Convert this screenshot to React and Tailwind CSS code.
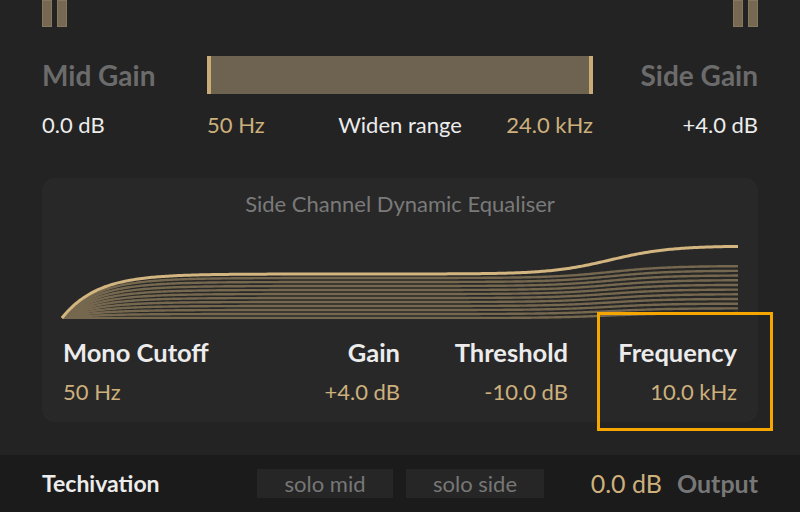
import React from "react";

// curve shape for the EQ display, in page coordinates
const X0 = 62;
const X1 = 738;
const BASE = 318;

function curveY(x, level, rise) {
  const left = (BASE - level) * Math.exp(-(x - X0) / 35);
  const right = rise / (1 + Math.exp(-(x - 610) / 30));
  return level + left - right;
}

function buildPath(level, rise) {
  const pts = [];
  for (let x = X0; x <= X1; x += 2) {
    pts.push(`${x},${Math.min(BASE, curveY(x, level, rise)).toFixed(2)}`);
  }
  return "M" + pts.join(" L");
}

const stripes = Array.from({ length: 11 }, (_, k) => {
  const i = k + 1;
  return buildPath(274 + 4 * i, 12 - (7 * (i - 1)) / 10);
});
const topCurve = buildPath(274, 28);

function Meter() {
  return (
    <div className="flex gap-[5px]">
      <div className="w-[10px] h-[27px] bg-[#766852] border border-[#86775d]" />
      <div className="w-[10px] h-[27px] bg-[#766852] border border-[#86775d]" />
    </div>
  );
}

function EqGraph() {
  return (
    <svg width="716" height="84" viewBox="42 238 716 84" className="block">
      <defs>
        <clipPath id="eqclip">
          <rect x="42" y="238" width="716" height="81" />
        </clipPath>
      </defs>
      <g clipPath="url(#eqclip)" fill="none">
        {stripes.map((d, i) => (
          <path key={i} d={d} stroke="#75684f" strokeWidth="2.4" />
        ))}
        <path d={topCurve} stroke="#d3b580" strokeWidth="3" />
      </g>
    </svg>
  );
}

export default function App() {
  return (
    <div
      className="relative w-[800px] h-[512px] overflow-hidden bg-[#232323] flex flex-col"
      style={{ fontFamily: "Lato, 'Open Sans', sans-serif" }}
    >
      {/* top meters */}
      <div className="flex justify-between px-[42px]">
        <Meter />
        <Meter />
      </div>

      {/* width controls */}
      <div className="grid grid-cols-[165px_386px_165px] px-[42px] mt-[29px] items-center h-[38px]">
        <div className="text-[28px] font-bold text-[#6b6b6b] leading-none">Mid Gain</div>
        <div className="h-[38px] bg-[#6e6350] border-x-4 border-[#c9ab77]" />
        <div className="text-[28px] font-bold text-[#6b6b6b] leading-none text-right">Side Gain</div>
      </div>
      <div className="grid grid-cols-[165px_386px_165px] px-[42px] mt-[20px] items-center text-[22px] leading-none h-[22px]">
        <div className="text-[#ececec]">0.0 dB</div>
        <div className="grid grid-cols-[1fr_auto_1fr]">
          <span className="text-[#cdb07c]">50 Hz</span>
          <span className="text-[#ececec]">Widen range</span>
          <span className="text-[#cdb07c] text-right">24.0 kHz</span>
        </div>
        <div className="text-[#ececec] text-right">+4.0 dB</div>
      </div>

      {/* side channel EQ panel */}
      <div className="mx-[42px] mt-[42px] h-[244px] rounded-[12px] bg-[#282828] flex flex-col">
        <div className="text-center text-[22px] text-[#7a7a7a] leading-none mt-[15px] h-[22px]">
          Side Channel Dynamic Equaliser
        </div>
        <div className="mt-[23px]">
          <EqGraph />
        </div>
        <div className="grid grid-cols-[185px_152px_168px_169px] px-[21px] mt-[18px] leading-none">
          <div className="text-[25.5px] font-bold text-[#ececec]">Mono Cutoff</div>
          <div className="text-[25.5px] font-bold text-[#ececec] text-right">Gain</div>
          <div className="text-[25.5px] font-bold text-[#ececec] text-right">Threshold</div>
          <div className="text-[25.5px] font-bold text-[#ececec] text-right">Frequency</div>
          <div className="text-[22px] text-[#cdb07c] mt-[15px]">50 Hz</div>
          <div className="text-[22px] text-[#cdb07c] mt-[15px] text-right">+4.0 dB</div>
          <div className="text-[22px] text-[#cdb07c] mt-[15px] text-right">-10.0 dB</div>
          <div className="text-[22px] text-[#cdb07c] mt-[15px] text-right">10.0 kHz</div>
        </div>
      </div>

      {/* footer */}
      <div className="mt-auto h-[57px] bg-[#1b1b1b] flex items-center px-[42px]">
        <div className="w-[215px] text-[23px] font-bold text-[#ececec]">Techivation</div>
        <div className="w-[136px] h-[29px] bg-[#262626] flex items-center justify-center text-[22px] text-[#777777]">
          solo mid
        </div>
        <div className="ml-[13px] w-[138px] h-[29px] bg-[#262626] flex items-center justify-center text-[22px] text-[#777777]">
          solo side
        </div>
        <div className="ml-auto flex items-center gap-[15px] text-[25px]">
          <span className="text-[#cdb07c]">0.0 dB</span>
          <span className="font-bold text-[#777777]">Output</span>
        </div>
      </div>

      {/* highlight box */}
      <div className="absolute left-[597px] top-[312px] w-[176px] h-[119px] border-[3px] border-[#f5a700]" />
    </div>
  );
}
